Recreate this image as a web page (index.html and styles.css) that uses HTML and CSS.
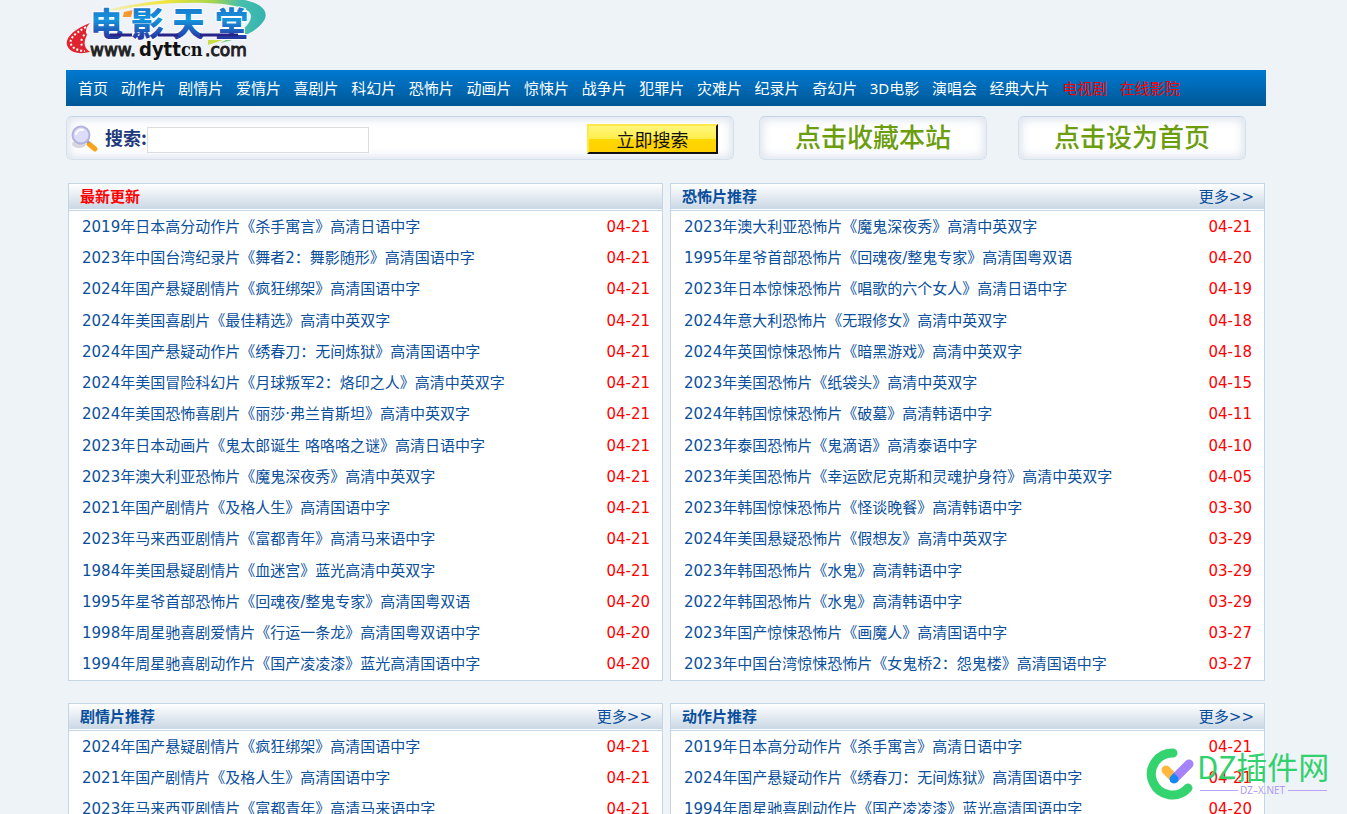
FILE: index.html
```html
<!DOCTYPE html>
<html lang="zh-CN">
<head>
<meta charset="utf-8">
<title>电影天堂</title>
<link rel="stylesheet" href="styles.css">
</head>
<body>
<div class="page">
  <header>
    <a class="logo" href="#" aria-label="电影天堂">
      <svg width="200" height="64" viewBox="0 0 200 64">
        <defs>
          <linearGradient id="swoosh" x1="0" x2="1" y1="0" y2="0">
            <stop offset="0" stop-color="#f1f0df"/>
            <stop offset=".4" stop-color="#f1e63c"/>
            <stop offset=".68" stop-color="#a8d54a"/>
            <stop offset=".85" stop-color="#45bfae"/>
            <stop offset="1" stop-color="#35b3b0"/>
          </linearGradient>
          <linearGradient id="word" x1="0" x2="0" y1="0" y2="1">
            <stop offset="0" stop-color="#1c5fc0"/>
            <stop offset=".45" stop-color="#1595dc"/>
            <stop offset=".8" stop-color="#2440a8"/>
            <stop offset="1" stop-color="#241c80"/>
          </linearGradient>
        </defs>
        <rect width="200" height="64" fill="#eff2f7"/>
        <path d="M30 13C70 1 120-3 160-2c32 1 46 12 37 24-8 11-24 17-43 21 17-8 31-17 31-27C185 1 123 1 84 5 62 8 46 11 30 13Z" fill="url(#swoosh)"/>
        <path d="M142 40l15 0-15 5Z" fill="#cbdc45"/>
        <path d="M58 12l9-2-2 7-8 0Z" fill="#f6982c"/>
        <path d="M24 23C8 29-1 38 1 45c2 7 11 10 23 7-6-4-7-9-3-17-2-4-1-8 3-12Z" fill="#df2430"/>
        <path d="M20 27C8 34 3 39 5 44c1 4 7 7 14 7" fill="none" stroke="#fff" stroke-width="2" stroke-dasharray="2 2"/>
        <path d="M22 31c-6 5-8 10-6 15" fill="none" stroke="#fff" stroke-width="2" stroke-dasharray="2 3"/>
        <text class="logo-word" x="24 65 106 149" y="36" fill="url(#word)">电影天堂</text>
        <path d="M44 35H66M92 35h20M134 35h38" stroke="#272587" stroke-width="3"/>
        <text class="logo-url" x="24" y="56">www.</text>
        <text class="logo-name" x="73" y="56">dytt</text>
        <text class="logo-tail" x="115" y="56">cn</text>
        <text class="logo-url" x="139" y="56">.com</text>
      </svg>
    </a>
    <nav class="nav">
      <ul>
        <li><a href="#">首页</a></li><li><a href="#">动作片</a></li><li><a href="#">剧情片</a></li><li><a href="#">爱情片</a></li><li><a href="#">喜剧片</a></li><li><a href="#">科幻片</a></li><li><a href="#">恐怖片</a></li><li><a href="#">动画片</a></li><li><a href="#">惊悚片</a></li><li><a href="#">战争片</a></li><li><a href="#">犯罪片</a></li><li><a href="#">灾难片</a></li><li><a href="#">纪录片</a></li><li><a href="#">奇幻片</a></li><li><a href="#">3D电影</a></li><li><a href="#">演唱会</a></li><li><a href="#">经典大片</a></li><li><a class="hot" href="#">电视剧</a></li><li><a class="hot" href="#">在线影院</a></li>
      </ul>
    </nav>
  </header>

  <div class="tools">
    <form class="search box">
      <svg class="lens" width="28" height="28" viewBox="0 0 28 28" aria-hidden="true">
        <ellipse cx="8" cy="19" rx="7" ry="4" fill="#d5d7dc"/>
        <path d="M18 19l6 5" stroke="#f9a51b" stroke-width="5" stroke-linecap="round"/>
        <path d="M15 15l3 3" stroke="#9a9aa8" stroke-width="3"/>
        <circle cx="10" cy="10" r="8.500" fill="#dcdcfb" stroke="#b3b3de" stroke-width="2"/>
        <path d="M5 9c1-3 4-5 7-4" fill="none" stroke="#fff" stroke-width="2" stroke-linecap="round"/>
      </svg>
      <label for="q">搜索:</label>
      <input id="q" type="text">
      <button class="go" type="button">立即搜索</button>
    </form>
    <div class="links">
      <button class="box link-box" type="button">点击收藏本站</button>
      <button class="box link-box" type="button">点击设为首页</button>
    </div>
  </div>

  <main class="panels">
    <section class="panel">
      <div class="head"><h2 class="latest">最新更新</h2></div>
      <ul>
        <li><a href="#">2019年日本高分动作片《杀手寓言》高清日语中字</a><span>04-21</span></li>
        <li><a href="#">2023年中国台湾纪录片《舞者2：舞影随形》高清国语中字</a><span>04-21</span></li>
        <li><a href="#">2024年国产悬疑剧情片《疯狂绑架》高清国语中字</a><span>04-21</span></li>
        <li><a href="#">2024年美国喜剧片《最佳精选》高清中英双字</a><span>04-21</span></li>
        <li><a href="#">2024年国产悬疑动作片《绣春刀：无间炼狱》高清国语中字</a><span>04-21</span></li>
        <li><a href="#">2024年美国冒险科幻片《月球叛军2：烙印之人》高清中英双字</a><span>04-21</span></li>
        <li><a href="#">2024年美国恐怖喜剧片《丽莎·弗兰肯斯坦》高清中英双字</a><span>04-21</span></li>
        <li><a href="#">2023年日本动画片《鬼太郎诞生 咯咯咯之谜》高清日语中字</a><span>04-21</span></li>
        <li><a href="#">2023年澳大利亚恐怖片《魔鬼深夜秀》高清中英双字</a><span>04-21</span></li>
        <li><a href="#">2021年国产剧情片《及格人生》高清国语中字</a><span>04-21</span></li>
        <li><a href="#">2023年马来西亚剧情片《富都青年》高清马来语中字</a><span>04-21</span></li>
        <li><a href="#">1984年美国悬疑剧情片《血迷宫》蓝光高清中英双字</a><span>04-21</span></li>
        <li><a href="#">1995年星爷首部恐怖片《回魂夜/整鬼专家》高清国粤双语</a><span>04-20</span></li>
        <li><a href="#">1998年周星驰喜剧爱情片《行运一条龙》高清国粤双语中字</a><span>04-20</span></li>
        <li><a href="#">1994年周星驰喜剧动作片《国产凌凌漆》蓝光高清国语中字</a><span>04-20</span></li>
      </ul>
    </section>
    <section class="panel">
      <div class="head"><h2>恐怖片推荐</h2><a href="#">更多&gt;&gt;</a></div>
      <ul>
        <li><a href="#">2023年澳大利亚恐怖片《魔鬼深夜秀》高清中英双字</a><span>04-21</span></li>
        <li><a href="#">1995年星爷首部恐怖片《回魂夜/整鬼专家》高清国粤双语</a><span>04-20</span></li>
        <li><a href="#">2023年日本惊悚恐怖片《唱歌的六个女人》高清日语中字</a><span>04-19</span></li>
        <li><a href="#">2024年意大利恐怖片《无瑕修女》高清中英双字</a><span>04-18</span></li>
        <li><a href="#">2024年英国惊悚恐怖片《暗黑游戏》高清中英双字</a><span>04-18</span></li>
        <li><a href="#">2023年美国恐怖片《纸袋头》高清中英双字</a><span>04-15</span></li>
        <li><a href="#">2024年韩国惊悚恐怖片《破墓》高清韩语中字</a><span>04-11</span></li>
        <li><a href="#">2023年泰国恐怖片《鬼滴语》高清泰语中字</a><span>04-10</span></li>
        <li><a href="#">2023年美国恐怖片《幸运欧尼克斯和灵魂护身符》高清中英双字</a><span>04-05</span></li>
        <li><a href="#">2023年韩国惊悚恐怖片《怪谈晚餐》高清韩语中字</a><span>03-30</span></li>
        <li><a href="#">2024年美国悬疑恐怖片《假想友》高清中英双字</a><span>03-29</span></li>
        <li><a href="#">2023年韩国恐怖片《水鬼》高清韩语中字</a><span>03-29</span></li>
        <li><a href="#">2022年韩国恐怖片《水鬼》高清韩语中字</a><span>03-29</span></li>
        <li><a href="#">2023年国产惊悚恐怖片《画魔人》高清国语中字</a><span>03-27</span></li>
        <li><a href="#">2023年中国台湾惊悚恐怖片《女鬼桥2：怨鬼楼》高清国语中字</a><span>03-27</span></li>
      </ul>
    </section>
    <section class="panel">
      <div class="head"><h2>剧情片推荐</h2><a href="#">更多&gt;&gt;</a></div>
      <ul>
        <li><a href="#">2024年国产悬疑剧情片《疯狂绑架》高清国语中字</a><span>04-21</span></li>
        <li><a href="#">2021年国产剧情片《及格人生》高清国语中字</a><span>04-21</span></li>
        <li><a href="#">2023年马来西亚剧情片《富都青年》高清马来语中字</a><span>04-21</span></li>
      </ul>
    </section>
    <section class="panel">
      <div class="head"><h2>动作片推荐</h2><a href="#">更多&gt;&gt;</a></div>
      <ul>
        <li><a href="#">2019年日本高分动作片《杀手寓言》高清日语中字</a><span>04-21</span></li>
        <li><a href="#">2024年国产悬疑动作片《绣春刀：无间炼狱》高清国语中字</a><span>04-21</span></li>
        <li><a href="#">1994年周星驰喜剧动作片《国产凌凌漆》蓝光高清国语中字</a><span>04-20</span></li>
      </ul>
    </section>
  </main>
</div>

<svg class="mark" width="182" height="52" viewBox="0 0 182 52">
  <path d="M26 5A21 21 0 1 0 41 40" fill="none" stroke="#33d46f" stroke-width="9" stroke-linecap="round"/>
  <path d="M19 22l8 8" stroke="#ffb83d" stroke-width="9" stroke-linecap="round"/>
  <path d="M28 30L42 16" stroke="#a583fb" stroke-width="9" stroke-linecap="round"/>
  <path d="M27 25l4 4a4.500 4.500 0 1 1-8 0Z" fill="#1687fb"/>
  <text class="mark-name" x="50" y="31">DZ插件网</text>
  <text class="mark-url" x="93" y="46">DZ–X.NET</text>
  <path d="M53 42.500H91M141 42.500h39" stroke="#b9a3f8"/>
</svg>
</body>
</html>
```

FILE: styles.css
```css
* {
  box-sizing: border-box;
}

body {
  margin: 0;
  padding-right: 15px;
  height: 100vh;
  overflow: hidden;
  position: relative;
  background: #eef3f7;
  color: #0a4f9c;
  font: 15px/31px "DejaVu Sans", "Noto Sans CJK SC", sans-serif;
}

a {
  color: inherit;
  text-decoration: none;
}

ul {
  list-style: none;
  margin: 0;
  padding: 0;
}

.page {
  max-width: 1200px;
  margin: 0 auto;
}

.logo,
.logo svg {
  display: block;
}

.logo {
  width: 200px;
  margin-bottom: 6px;
}

.logo-word {
  font: 900 33px "Noto Sans CJK SC", sans-serif;
  stroke: #fff;
  stroke-width: 2px;
  paint-order: stroke;
}

.logo-url {
  font: 17px "DejaVu Sans", sans-serif;
  fill: #222;
  stroke: #222;
  stroke-width: 1px;
}

.logo-name {
  font: bold 20px "DejaVu Sans Condensed", "DejaVu Sans", sans-serif;
  fill: #111;
}

.logo-tail {
  font: bold 18px "DejaVu Serif Condensed", "DejaVu Serif", serif;
  fill: #111;
}

.nav {
  padding: 0 12px;
  background: linear-gradient(#0079d1, #005896);
  color: #fff;
  font-family: "Noto Sans", "Noto Sans CJK SC", sans-serif;
  line-height: 36px;
}

.nav ul {
  display: flex;
  justify-content: space-between;
  max-width: 1102px;
  white-space: nowrap;
}

.hot {
  color: #f00;
}

.tools {
  display: flex;
  gap: 25px;
  margin: 10px 20px 23px 0;
}

.links {
  display: flex;
  gap: 31px;
}

.box {
  height: 44px;
  border: 1px solid #d5e0eb;
  border-top-color: #c3d3e4;
  border-radius: 6px;
  background: #fff;
  box-shadow: inset 0 0 10px 3px #dfe6ef;
}

.search {
  display: flex;
  flex: 1;
  align-items: center;
  padding: 0 15px 0 4px;
}

.lens {
  margin-right: 6px;
}

.search label {
  padding-bottom: 2px;
  color: #1e3a7c;
  font: bold 18px "Noto Sans CJK SC", sans-serif;
}

.search input {
  width: 222px;
  height: 26px;
  margin-top: 4px;
  border: 1px solid #ddd;
  padding: 0 4px;
  background: #fff;
}

.search .lens,
.search .go {
  margin-top: 2px;
}

.go {
  width: 131px;
  height: 30px;
  margin-left: auto;
  padding: 0;
  border: 2px solid;
  border-color: #ffe94a #111 #111 #ffe94a;
  background: linear-gradient(#fff67c, #ffee4d 48%, #ffd800 50%, #ffd000);
  color: #111;
  font: 18px/24px "Noto Sans CJK SC", sans-serif;
}

.link-box {
  width: 228px;
  padding: 0 0 4px;
  color: #6b9d0c;
  font: 500 26px/38px "Noto Sans CJK SC", sans-serif;
}

.panels {
  display: grid;
  grid-template-columns: 1fr 1fr;
  gap: 22px 7px;
  padding: 0 1px 0 2px;
}

.panel {
  border: 1px solid #c5d6e3;
  background: #fff;
}

.head {
  display: flex;
  justify-content: space-between;
  height: 27px;
  padding: 0 10px 0 11px;
  border-bottom: 1px solid #c5d6e3;
  background: linear-gradient(#fff, #c9d7e4) no-repeat 0 0 / 100% 25px;
  line-height: 26px;
}

.head h2 {
  margin: 0;
  font-size: 15px;
}

.head .latest {
  color: #f00;
}

.panel ul {
  padding: 1px 12px 0 13px;
}

.panel li {
  display: flex;
  justify-content: space-between;
  white-space: nowrap;
}

.panel li:nth-child(4n) {
  margin-top: 1px;
}

.panel span {
  color: #f00;
}

.mark {
  position: absolute;
  right: 18px;
  bottom: 14px;
  overflow: visible;
}

.mark-name {
  font: 31px "Noto Sans CJK SC", sans-serif;
  fill: #33d06e;
}

.mark-url {
  font: 10px "Noto Sans", sans-serif;
  fill: #b19af5;
}
```
